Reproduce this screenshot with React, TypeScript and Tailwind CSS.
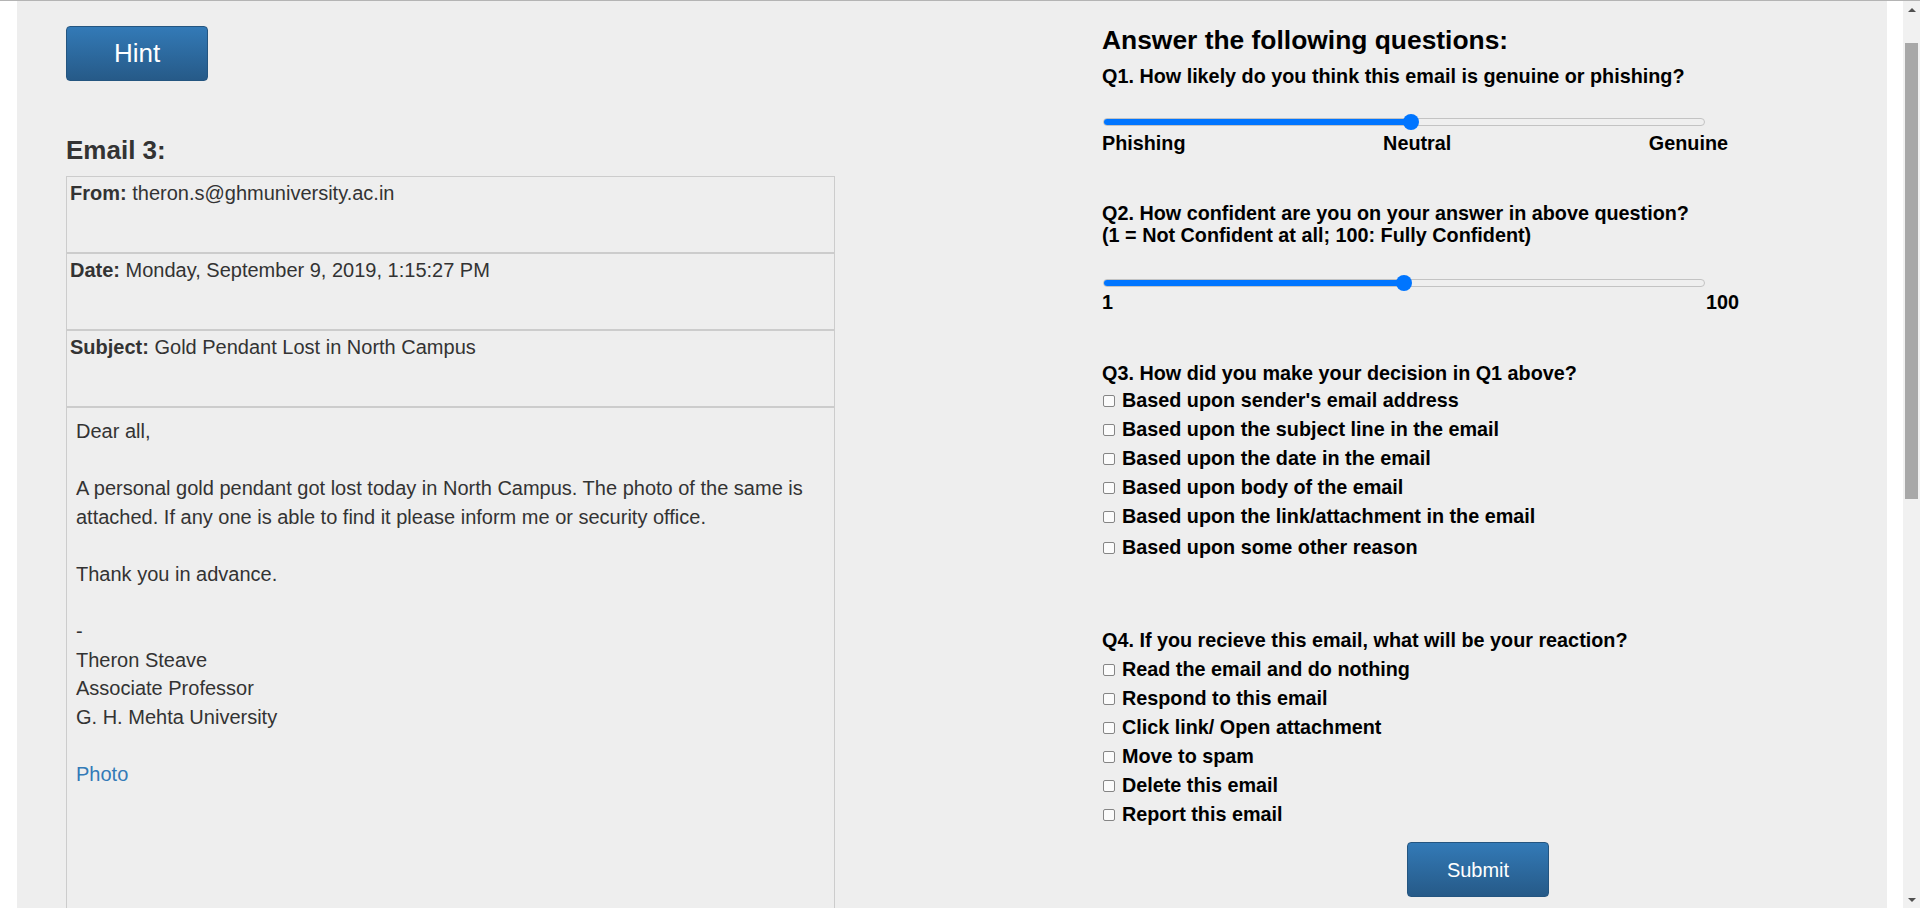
import React from "react";

type Slider = { fraction: number; width: number };

const q3Options = [
  "Based upon sender's email address",
  "Based upon the subject line in the email",
  "Based upon the date in the email",
  "Based upon body of the email",
  "Based upon the link/attachment in the email",
  "Based upon some other reason",
];

const q4Options = [
  "Read the email and do nothing",
  "Respond to this email",
  "Click link/ Open attachment",
  "Move to spam",
  "Delete this email",
  "Report this email",
];

const RangeBar = ({ fraction, width }: Slider) => {
  // thumb travels between the two ends of the track, 16px thumb
  const center = 8 + fraction * (width - 16);
  return (
    <div className="relative ml-[1px] flex h-[16px] items-center" style={{ width }}>
      <div className="h-[8px] w-full overflow-hidden rounded-full border border-[#c3c3c3] bg-[#efefef]">
        <div className="-mt-px -ml-px h-[8px] rounded-l-full bg-[#0075ff]" style={{ width: center }} />
      </div>
      <div
        className="absolute top-0 h-[16px] w-[16px] rounded-full bg-[#0075ff]"
        style={{ left: center - 8 }}
      />
    </div>
  );
};

const CheckRow = ({ label, extra }: { label: string; extra?: string }) => (
  <label className={`flex h-[29px] items-center leading-[29px] ${extra ?? ""}`}>
    <span className="mr-[7px] ml-[1px] inline-block h-[12px] w-[12px] rounded-[2px] border border-[#858585] bg-[#fbfbfb]" />
    {label}
  </label>
);

const BlueButton = ({ children, className }: { children: React.ReactNode; className: string }) => (
  <button
    className={`block h-[55px] w-[142px] shrink-0 rounded-[4px] border border-[#245580] bg-gradient-to-b from-[#337ab7] to-[#265a88] text-white ${className}`}
  >
    {children}
  </button>
);

export default function App() {
  return (
    <div className="flex h-[908px] w-[1920px] overflow-hidden border-t border-[#b4b4b4] bg-white font-['Liberation_Sans',Arial,sans-serif]">
      <div className="ml-[17px] flex w-[1870px] shrink-0 items-start bg-[#eeeeee]">
        {/* Email side */}
        <div className="ml-[49px] w-[769px] shrink-0 text-[#333333]">
          <BlueButton className="mt-[25px] text-[26px]">Hint</BlueButton>
          <h3 className="mt-[55px] text-[26px] leading-[28px] font-bold">Email 3:</h3>
          <div className="mt-[12px] text-[20px] leading-[28.57px]">
            <div className="h-[77px] border border-[#cccccc] px-[3px] pt-[2px]">
              <b>From:</b> theron.s@ghmuniversity.ac.in
            </div>
            <div className="h-[77px] border border-[#cccccc] px-[3px] pt-[2px]">
              <b>Date:</b> Monday, September 9, 2019, 1:15:27 PM
            </div>
            <div className="h-[77px] border border-[#cccccc] px-[3px] pt-[2px]">
              <b>Subject:</b> Gold Pendant Lost in North Campus
            </div>
            <div className="h-[700px] border border-[#cccccc] p-[9px]">
              Dear all,
              <br />
              <br />
              A personal gold pendant got lost today in North Campus. The photo of the same is
              attached. If any one is able to find it please inform me or security office.
              <br />
              <br />
              Thank you in advance.
              <br />
              <br />
              -
              <br />
              Theron Steave
              <br />
              Associate Professor
              <br />
              G. H. Mehta University
              <br />
              <br />
              <a className="text-[#337ab7]">Photo</a>
            </div>
          </div>
        </div>

        {/* Questions side */}
        <div className="ml-[267px] w-[750px] shrink-0 text-[19.8px] leading-[22px] font-bold text-black">
          <h3 className="mt-[25px] text-[26.4px] leading-[28px]">Answer the following questions:</h3>
          <p className="mt-[11px]">Q1. How likely do you think this email is genuine or phishing?</p>
          <div className="mt-[27px]">
            <RangeBar fraction={0.512} width={602} />
          </div>
          <div className="mt-[2px] flex w-[626px] justify-between">
            <span>Phishing</span>
            <span>Neutral</span>
            <span>Genuine</span>
          </div>

          <p className="mt-[48px]">
            Q2. How confident are you on your answer in above question?
            <br />
            (1 = Not Confident at all; 100: Fully Confident)
          </p>
          <div className="mt-[29px]">
            <RangeBar fraction={0.5} width={602} />
          </div>
          <div className="flex w-[637px] justify-between">
            <span>1</span>
            <span>100</span>
          </div>

          <p className="mt-[49px]">Q3. How did you make your decision in Q1 above?</p>
          <div className="mt-[2px] flex flex-col">
            {q3Options.map((o, i) => (
              <CheckRow key={o} label={o} extra={i === q3Options.length - 1 ? "mt-[2px]" : ""} />
            ))}
          </div>

          <p className="mt-[67px]">Q4. If you recieve this email, what will be your reaction?</p>
          <div className="mt-[4px] flex flex-col">
            {q4Options.map((o) => (
              <CheckRow key={o} label={o} />
            ))}
          </div>

          <BlueButton className="mt-[13px] ml-[305px] text-[20px] font-normal">Submit</BlueButton>
        </div>
      </div>

      <div className="w-[16px] shrink-0" />

      {/* scrollbar */}
      <div className="flex w-[17px] shrink-0 flex-col bg-[#f1f1f1]">
        <div className="flex h-[17px] items-center justify-center">
          <span className="h-0 w-0 border-x-[4px] border-b-[4px] border-x-transparent border-b-[#505050]" />
        </div>
        <div className="mx-[2px] mt-[25px] h-[456px] bg-[#a8a8a8]" />
        <div className="mt-auto flex h-[17px] items-center justify-center">
          <span className="h-0 w-0 border-x-[4px] border-t-[4px] border-x-transparent border-t-[#505050]" />
        </div>
      </div>
    </div>
  );
}
